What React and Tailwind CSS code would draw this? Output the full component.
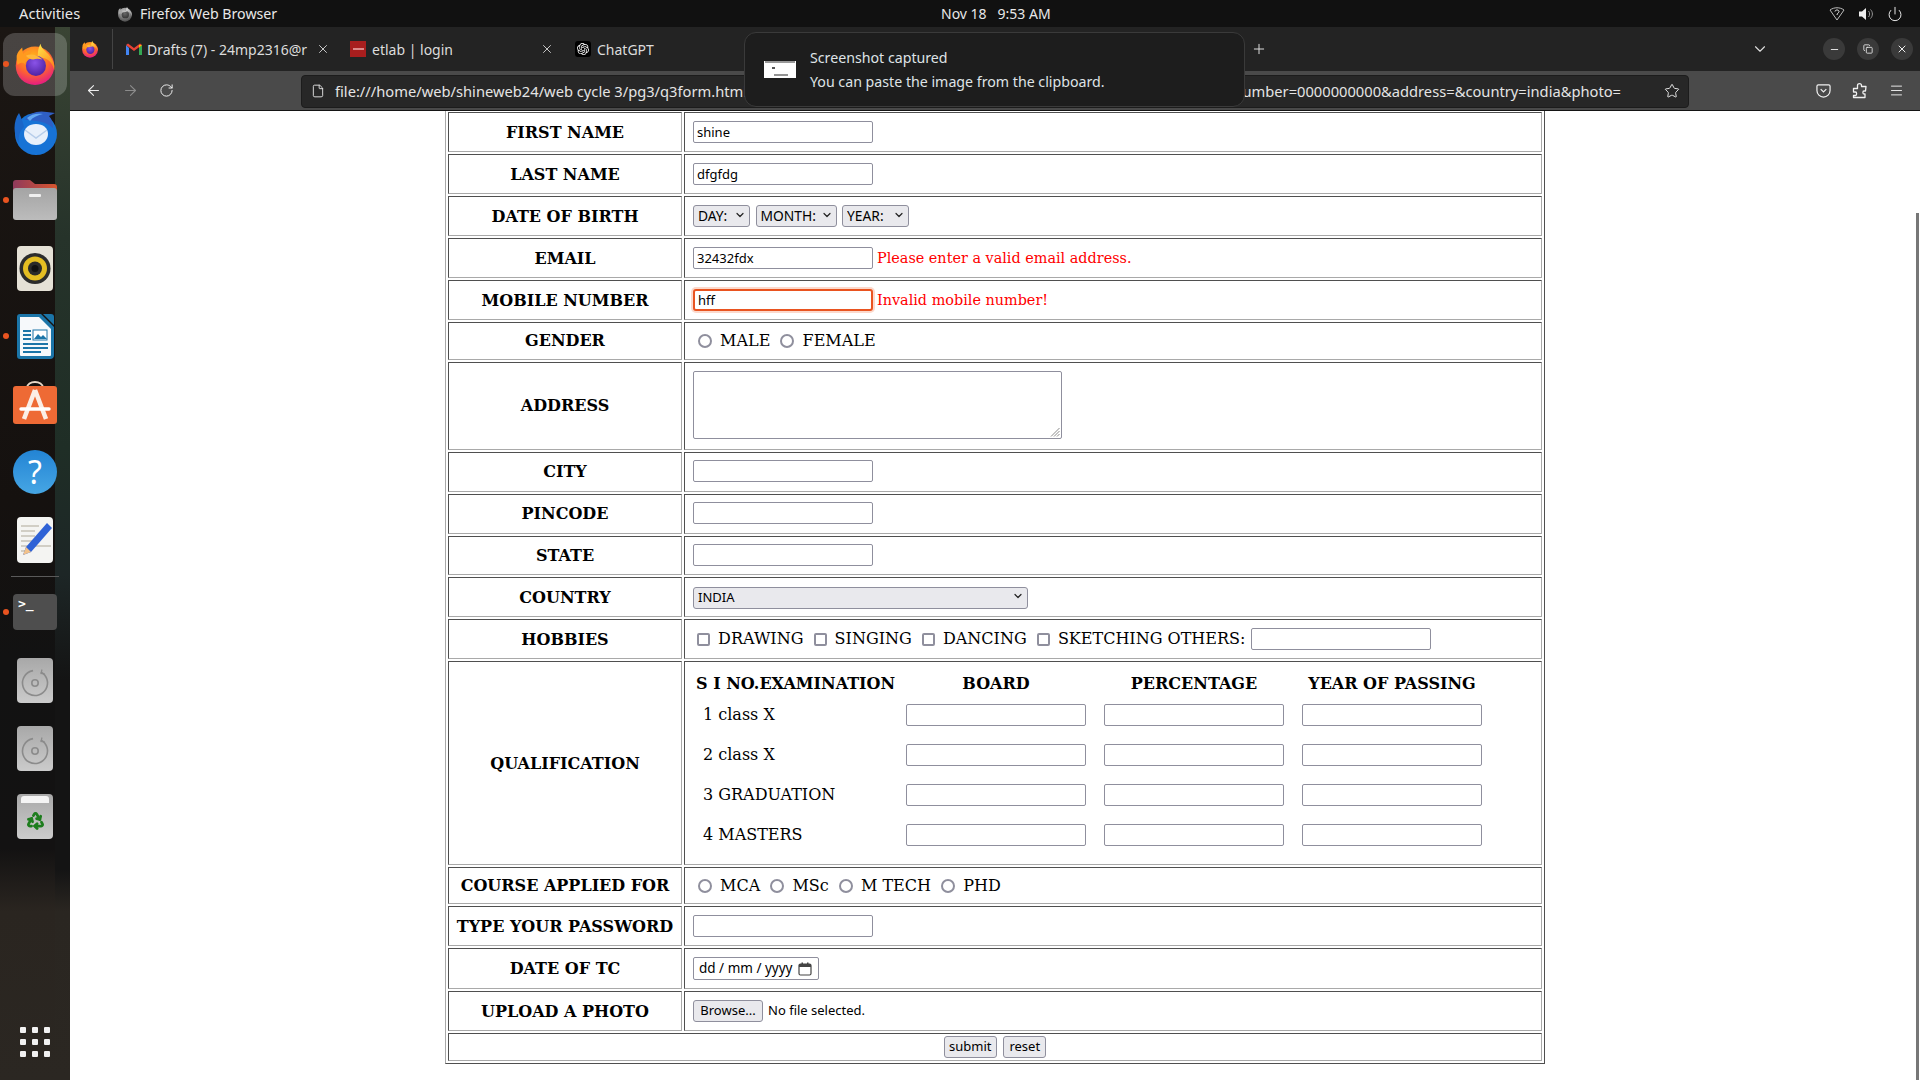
import React from "react";
import { ArrowLeft, ArrowRight, RotateCw, File, Star, Menu, ChevronDown, Plus, X, Minus, Copy, Power, Recycle } from "lucide-react";
import { SiOpenai } from "react-icons/si";

function FirefoxLogo({ size = 44, className = "" }) {
  return (
    <svg width={size} height={size} viewBox="0 0 48 48" className={className}>
      <defs>
        <radialGradient id="ffBase" cx="0.45" cy="0.25" r="0.85">
          <stop offset="0" stopColor="#ffb21c" />
          <stop offset="0.5" stopColor="#ff6a2a" />
          <stop offset="0.85" stopColor="#e8227a" />
          <stop offset="1" stopColor="#d41d8c" />
        </radialGradient>
        <linearGradient id="ffFlame" x1="0" y1="0" x2="0.6" y2="1">
          <stop offset="0" stopColor="#ffe848" />
          <stop offset="1" stopColor="#ff8a1e" />
        </linearGradient>
        <radialGradient id="ffCore" cx="0.45" cy="0.35" r="0.7">
          <stop offset="0" stopColor="#8a53e8" />
          <stop offset="1" stopColor="#4a1f9e" />
        </radialGradient>
      </defs>
      <circle cx="24" cy="26" r="21" fill="url(#ffBase)" />
      <path d="M30 2c1 6 6 8 10 13 4 5 6 10 5 16-1-6-5-11-10-13-2-1-6-1-8-3 0-5 1-9 3-13z" fill="url(#ffFlame)" />
      <circle cx="25" cy="26" r="11" fill="url(#ffCore)" />
      <path d="M4 15c1-4 3-6 6-9l1 7c3-3 6-4 10-3-4 3-3 6 1 7-4 2-8 3-9 7-2-2-5-2-8 1-1-3-1-7-1-10z" fill="#ff9a1f" />
      <path d="M14 15c4-2 9-2 14 1 3 2 4 3 4 3-4-1-7-1-10 0-3 0-5-1-8-4z" fill="#ffb73a" />
    </svg>
  );
}

function Thunderbird() {
  return (
    <svg width="48" height="48" viewBox="0 0 48 48">
      <circle cx="25" cy="26" r="21" fill="#1773d6" />
      <path d="M8 5c-6 8-6 22 0 30-1-8 1-12 5-16-1-5-3-10-5-14z" fill="#1a66c8" />
      <path d="M14 12c4-7 13-10 22-8l8 1-6 3c3 3 4 8 4 12-6-6-18-8-28-8z" fill="#2f5fc4" />
      <path d="M16 10c4-4 10-5 16-4-5 1-10 3-13 7z" fill="#62a8f2" />
      <path d="M25 16c7 0 12 4 12 10s-5 11-12 11-12-5-12-11 5-10 12-10z" fill="#e8f0fb" />
      <path d="M14 22l11 8 11-8" fill="none" stroke="#b6cdea" strokeWidth="1.5" />
    </svg>
  );
}

function Folder() {
  return (
    <svg width="44" height="42" viewBox="0 0 44 42">
      <defs>
        <linearGradient id="fldTop" x1="0" y1="0" x2="1" y2="0">
          <stop offset="0" stopColor="#8f3a5c" />
          <stop offset="1" stopColor="#d8552e" />
        </linearGradient>
        <linearGradient id="fldBody" x1="0" y1="0" x2="0" y2="1">
          <stop offset="0" stopColor="#a4a4a4" />
          <stop offset="1" stopColor="#bcbcbc" />
        </linearGradient>
      </defs>
      <path d="M0 4a3 3 0 013-3h14l5 4h19a3 3 0 013 3v12H0z" fill="url(#fldTop)" />
      <rect x="0" y="9" width="44" height="32" rx="3" fill="url(#fldBody)" />
      <rect x="16" y="15" width="12" height="3" rx="1" fill="#efefef" />
    </svg>
  );
}

function Rhythmbox() {
  return (
    <svg width="36" height="45" viewBox="0 0 36 45">
      <rect x="0" y="0" width="36" height="45" rx="4" fill="#e5e1d6" />
      <circle cx="18" cy="22.5" r="15.5" fill="#2c2c2c" />
      <circle cx="18" cy="22.5" r="12" fill="#e4bd22" />
      <circle cx="18" cy="22.5" r="7" fill="#2a2a2a" />
      <circle cx="18" cy="22.5" r="3.5" fill="#111" />
    </svg>
  );
}

function Writer() {
  return (
    <svg width="37" height="45" viewBox="0 0 37 45">
      <path d="M3 0h21l13 13v28a4 4 0 01-4 4H3a3 3 0 01-3-3V3a3 3 0 013-3z" fill="#1b75a8" />
      <path d="M3 3h19l12 12v26a1 1 0 01-1 1H4a1 1 0 01-1-1z" fill="#f6f9fb" />
      <path d="M26 0h8a3 3 0 013 3v8z" fill="#1b75a8" />
      <rect x="6" y="16" width="8" height="2" fill="#1b75a8" />
      <rect x="6" y="20" width="8" height="2" fill="#1b75a8" />
      <rect x="6" y="24" width="8" height="2" fill="#1b75a8" />
      <rect x="16" y="16" width="14" height="10" fill="#fff" stroke="#1b75a8" />
      <path d="M17 25l4-5 3 3 2-2 4 4z" fill="#1b75a8" />
      <rect x="6" y="29" width="25" height="2" fill="#1b75a8" />
      <rect x="6" y="33" width="25" height="2" fill="#1b75a8" />
      <rect x="6" y="37" width="18" height="2" fill="#1b75a8" />
    </svg>
  );
}

function AppStore() {
  return (
    <svg width="44" height="43" viewBox="0 0 44 43" className="mb-[4px]">
      <path d="M14 7c0-8 16-8 16 0" fill="none" stroke="#e8d8c8" strokeWidth="2" />
      <rect x="0" y="5" width="44" height="38" rx="3" fill="#ee6a35" />
      <path d="M22 9l-11 29M22 9l11 29" stroke="#fbeee6" strokeWidth="4.5" fill="none" />
      <path d="M8 28h28" stroke="#fff" strokeWidth="3.5" strokeLinecap="round" />
    </svg>
  );
}

function TextEditor() {
  return (
    <svg width="36" height="46" viewBox="0 0 36 46">
      <rect x="0" y="0" width="36" height="46" rx="4" fill="#f4f4f2" />
      <path d="M4 9h18M4 14h14M4 19h14M4 24h12M4 29h30M4 34h8" stroke="#c5c1b6" strokeWidth="1.6" />
      <path d="M30 6l5 5-21 24-8 3 3-8z" fill="#2f62d6" />
      <path d="M6 38l3-8 5 5z" fill="#f2c28a" />
    </svg>
  );
}

function Disc() {
  return (
    <svg width="36" height="45" viewBox="0 0 36 45">
      <defs>
        <linearGradient id="discG" x1="0" y1="0" x2="0" y2="1">
          <stop offset="0" stopColor="#a8a8a8" />
          <stop offset="1" stopColor="#cbcbcb" />
        </linearGradient>
      </defs>
      <rect x="0" y="0" width="36" height="45" rx="4" fill="url(#discG)" />
      <circle cx="18" cy="25" r="12.500" fill="none" stroke="#8b8b8b" strokeWidth="1.600" strokeDasharray="70 9" transform="rotate(-62 18 25)" />
      <path d="M25 11.500l-1 4 4 .5" fill="none" stroke="#8b8b8b" strokeWidth="1.200" />
      <circle cx="18" cy="25" r="3.200" fill="none" stroke="#8b8b8b" strokeWidth="1.600" />
    </svg>
  );
}

function Trash() {
  return (
    <div className="relative w-[36px] h-[45px] rounded-[4px] bg-[linear-gradient(#a8a8a8,#cccccc)] flex items-center justify-center">
      <div className="absolute top-[2px] left-[4px] right-[4px] h-[7px] bg-[#f4f4f4] rounded-t-[3px]" />
      <Recycle size={19} color="#1d7d1d" strokeWidth={3.5} className="mt-[9px]" />
    </div>
  );
}

const dockItems = [
  { key: "ff", node: <FirefoxLogo size={44} />, active: true, dot: true },
  { key: "tb", node: <Thunderbird /> },
  { key: "folder", node: <Folder />, dot: true },
  { key: "rb", node: <Rhythmbox /> },
  { key: "wr", node: <Writer />, dot: true },
  { key: "as", node: <AppStore /> },
  {
    key: "help",
    node: (
      <div className="w-[44px] h-[44px] rounded-full bg-[linear-gradient(#2384d4,#46a6e4)] flex items-center justify-center text-white text-[32px] leading-none font-['Noto_Sans',sans-serif]">
        ?
      </div>
    ),
  },
  { key: "te", node: <TextEditor /> },
];

const dockItems2 = [
  {
    key: "term",
    dot: true,
    node: (
      <div className="w-[44px] h-[36px] rounded-[4px] bg-[#4e4e4e] text-white text-[13px] leading-none font-bold pl-[5px] pt-[3px] font-['DejaVu_Sans_Mono',monospace]">
        &gt;_
      </div>
    ),
  },
  { key: "d1", node: <Disc /> },
  { key: "d2", node: <Disc /> },
  { key: "trash", node: <Trash /> },
];

function DockItem({ item }) {
  return (
    <div className="relative w-full h-[68px] flex items-center justify-center">
      {item.active && <div className="absolute left-[3px] top-[3px] w-[64px] h-[63px] rounded-[12px] bg-white/20" />}
      {item.dot && <div className="absolute left-[3px] top-[31px] w-[6px] h-[6px] rounded-full bg-[#e95420]" />}
      <div className="relative flex">{item.node}</div>
    </div>
  );
}

function Dock() {
  return (
    <aside className="relative w-[70px] shrink-0 flex flex-col pt-[3px] bg-[linear-gradient(#1b1613_0%,#15110f_45%,#121212_60%,#131212_78%,#2a2520_84%,#2b2722_100%)]">
      <div className="absolute right-0 top-0 bottom-0 w-[15px] bg-[linear-gradient(#3a4434_0%,#26332a_20%,#1f2e26_40%,#1d2626_52%,#141414_62%,#141414_80%,#2a2621_84%,#2b2722_100%)]" />
      <div className="relative flex flex-col h-full">
        {dockItems.map((i) => <DockItem key={i.key} item={i} />)}
        <div className="mx-[11px] h-px bg-[#5a5a5a] mt-[2px] mb-[1px]" />
        {dockItems2.map((i) => <DockItem key={i.key} item={i} />)}
        <div className="mt-auto mb-[23px] ml-[20px] grid grid-cols-[6px_6px_6px] gap-[6px]">
          {[1, 2, 3, 4, 5, 6, 7, 8, 9].map((n) => <div key={n} className="w-[6px] h-[6px] rounded-[1px] bg-[#f2f2f2]" />)}
        </div>
      </div>
    </aside>
  );
}

function TopBar() {
  return (
    <header className="relative h-[27px] shrink-0 bg-[#111111] text-[#e8e8e8] text-[14px] flex items-center font-['Noto_Sans',sans-serif]">
      <span className="ml-[19px] w-[98px] text-[14.700px]">Activities</span>
      <FirefoxLogo size={16} className="grayscale" />
      <span className="ml-[7px] text-[14.200px]">Firefox Web Browser</span>
      <span className="absolute left-[941px] whitespace-pre">Nov 18   9:53 AM</span>
      <div className="ml-auto mr-[17px] flex items-center gap-[13px]">
        <svg width="16" height="16" viewBox="0 0 16 16" fill="none" stroke="#bbb" strokeWidth="1">
          <path d="M1 4c4-3 10-3 14 0l-7 10z" />
          <path d="M6 5.500c0-2 4-2 4 0 0 1.500-2 1.500-2 3.500" stroke="#eee" />
        </svg>
        <svg width="16" height="16" viewBox="0 0 16 16">
          <path d="M1 5.500h3l4-3.500v12l-4-3.500H1z" fill="#eee" />
          <path d="M10.500 5c1.500 1.500 1.500 4.500 0 6M12.500 3.500c2.500 2.500 2.500 6.500 0 9" fill="none" stroke="#999" />
        </svg>
        <Power size={16} color="#e8e8e8" strokeWidth={1.5} />
      </div>
    </header>
  );
}

function Tab({ icon, title, close, w, gap = "ml-[6px]" }) {
  return (
    <div className={`flex items-center h-full ${w}`}>
      {icon}
      <span className={`${gap} mr-[3px] flex-1 overflow-hidden whitespace-nowrap`}>{title}</span>
      {close && <X size={14} color="#ddd" strokeWidth={1.5} />}
    </div>
  );
}

function TabBar() {
  return (
    <div className="h-[44px] shrink-0 bg-[#232323] flex items-center text-[14px] text-[#dcdcdc] font-['Noto_Sans',sans-serif]">
      <div className="w-[43px] h-[40px] border-r border-[#444] flex items-center justify-center pr-[3px]">
        <FirefoxLogo size={18} />
      </div>
      <div className="w-[13px]" />
      <Tab
        w="w-[204px]"
        gap="ml-[5px]"
        title="Drafts (7) - 24mp2316@r"
        close
        icon={
          <svg width="16" height="13" viewBox="0 0 16 13">
            <path d="M0 2v10h3V5z" fill="#4285f4" />
            <path d="M16 2v10h-3V5z" fill="#34a853" />
            <path d="M0 2l8 6 8-6-2-1.500-6 4.500-6-4.500z" fill="#ea4335" />
            <path d="M13 2l3 0-3 3z" fill="#fbbc04" />
          </svg>
        }
      />
      <div className="w-[20px]" />
      <Tab
        w="w-[204px]"
        title="etlab | login"
        close
        icon={
          <div className="w-[16px] h-[16px] bg-[#a81e1e] flex items-center justify-center">
            <div className="w-[11px] h-[2px] bg-[#d88]" />
          </div>
        }
      />
      <div className="w-[21px]" />
      <Tab
        w="w-[200px]"
        title="ChatGPT"
        icon={
          <div className="w-[16px] h-[16px] rounded-[3px] bg-black flex items-center justify-center">
            <SiOpenai size={12} color="#fff" />
          </div>
        }
      />
      <Plus size={16} color="#ddd" strokeWidth={1.5} className="absolute left-[1181px]" />
      <ChevronDown size={18} color="#ddd" strokeWidth={1.5} className="absolute left-[1681px]" />
      <div className="ml-auto mr-[7px] flex items-center gap-[12px]">
        {[<Minus key="a" size={11} color="#eee" />, <Copy key="b" size={10} color="#eee" />, <X key="c" size={12} color="#eee" />].map((ic, i) => (
          <div key={i} className="w-[22px] h-[22px] rounded-full bg-[#3a3a3a] flex items-center justify-center">{ic}</div>
        ))}
      </div>
    </div>
  );
}

function Toolbar() {
  return (
    <div className="h-[40px] shrink-0 bg-[#4a4a4a] border-b border-[#141414] flex items-center font-['Noto_Sans',sans-serif]">
      <div className="w-[231px] pl-[15px] flex items-center gap-[20px]">
        <ArrowLeft size={17} color="#eeeeee" strokeWidth={1.5} />
        <ArrowRight size={17} color="#8c8c8c" strokeWidth={1.5} />
        <RotateCw size={15} color="#eeeeee" strokeWidth={1.6} />
      </div>
      <div className="w-[1388px] h-[33px] mt-[1px] bg-[#272727] border border-[#1c1c1c] rounded-[4px] flex items-center text-[14.700px] text-[#e4e4e4]">
        <File size={14} color="#e4e4e4" strokeWidth={1.6} className="ml-[9px]" />
        <span className="ml-[10px] whitespace-pre">file:///home/web/shineweb24/web cycle 3/pg3/q3form.html</span>
        <span className="ml-auto whitespace-pre">umber=0000000000&amp;address=&amp;country=india&amp;photo=</span>
        <Star size={16} color="#e4e4e4" strokeWidth={1.5} className="ml-[43px] mr-[8px]" />
      </div>
      <div className="ml-auto mr-[16px] flex items-center gap-[21px]">
        <svg width="15" height="15" viewBox="0 0 16 16" fill="none" stroke="#f0f0f0" strokeWidth="1.300">
          <path d="M2.500 2h11a1.500 1.500 0 011.500 1.500V8a7 7 0 01-14 0V3.500A1.500 1.500 0 012.500 2z" />
          <path d="M5 6.500l3 3 3-3" />
        </svg>
        <svg width="16" height="17" viewBox="0 0 16 17" fill="none" stroke="#f0f0f0" strokeWidth="1.300" strokeLinejoin="round">
          <path d="M1.500 6.500h4V3.500c0-2.500 4-2.500 4 0v1h4.500l-.5 4.500h-1.500c-1.500 0-1.500 3 0 3h1v3.500H1.500v-2h2c1.500 0 1.500-3.500 0-3.500h-2z" />
        </svg>
        <Menu size={15} color="#f0f0f0" strokeWidth={1.5} />
      </div>
    </div>
  );
}

function Notification() {
  return (
    <div className="absolute left-[744px] top-[32px] w-[501px] h-[75px] rounded-[12px] bg-[#1d1d1d] border border-[#3a3a3a] flex items-center text-[14.200px] text-[#dfe3e6] font-['Noto_Sans',sans-serif]">
      <div className="ml-[19px] w-[32px] h-[17px] bg-white relative">
        <div className="absolute left-[1px] top-0 w-[30px] h-[2px] bg-[#333]/50" />
        <div className="absolute left-[8px] top-[6px] w-[3px] h-[2px] bg-[#555]" />
        <div className="absolute left-[10px] top-[13px] w-[14px] h-[2px] bg-[#666]/70" />
      </div>
      <div className="ml-[14px] flex flex-col gap-[4px] leading-[20px]">
        <span>Screenshot captured</span>
        <span>You can paste the image from the clipboard.</span>
      </div>
    </div>
  );
}

const labelCell = "border border-t-[#4f4f4f] border-l-[#4f4f4f] border-r-[#a9a9a9] border-b-[#a9a9a9] px-[1px] text-center font-bold align-middle whitespace-nowrap";
const valueCell = "border border-t-[#4f4f4f] border-l-[#4f4f4f] border-r-[#a9a9a9] border-b-[#a9a9a9] pl-[8px] pr-[1px] py-[1px] align-middle";
const inputCls = "block w-[180px] h-[22px] bg-white border border-[#8f8f9d] rounded-[2px] px-[3px] text-[13px] text-black outline-none font-['Noto_Sans',sans-serif]";
const radioCls = "appearance-none inline-block w-[14px] h-[14px] rounded-full border-2 border-[#8f8f9d] bg-white align-[-2px] ml-[5px] mr-[3px]";
const checkCls = "appearance-none inline-block w-[13px] h-[13px] rounded-[2px] border-2 border-[#8f8f9d] bg-white align-[-2px] ml-[5px] mr-[3px]";
const errorCls = "text-[#ff0000] text-[14.400px] mt-[2px]";

function TextInput({ value = "", type = "text", className = "" }) {
  return <input type={type} defaultValue={value} className={`${inputCls} ${className}`} />;
}

function Sel({ label, w, text = "text-[13.800px]", chevron = "right-[4px]" }) {
  return (
    <div className={`relative h-[22px] ${w}`}>
      <select className={`appearance-none w-full h-full bg-[#e9e9ed] border border-[#8f8f9d] rounded-[3px] pl-[4px] text-black font-['Noto_Sans',sans-serif] outline-none ${text}`}>
        <option>{label}</option>
      </select>
      <ChevronDown size={12} strokeWidth={2.4} color="#222" className={`absolute top-[5px] pointer-events-none ${chevron}`} />
    </div>
  );
}

function Row({ label, h, children, lift = "" }) {
  return (
    <tr>
      <td className={`${labelCell} ${h} ${lift}`}>{label}</td>
      <td className={`${valueCell} ${h}`}>{children}</td>
    </tr>
  );
}

function Radio({ label, name }) {
  return (
    <>
      <input type="radio" name={name} className={radioCls} /> {label}{" "}
    </>
  );
}

function Check({ label }) {
  return (
    <>
      <input type="checkbox" className={checkCls} /> {label}{" "}
    </>
  );
}

function Qualification() {
  const rows = ["1 class X", "2 class X", "3 GRADUATION", "4 MASTERS"];
  return (
    <div className="pl-[3px]">
      <div className="grid grid-cols-[192px_180px_180px_180px] gap-x-[18px] h-[22px] mb-[9px] items-center font-bold text-center whitespace-nowrap">
        <div className="text-left">S I NO.EXAMINATION</div>
        <div>BOARD</div>
        <div>PERCENTAGE</div>
        <div>YEAR OF PASSING</div>
      </div>
      <div className="grid grid-cols-[192px_180px_180px_180px] gap-x-[18px] gap-y-[16px] items-center">
        {rows.map((r) => (
          <React.Fragment key={r}>
            <div className="pl-[7px]">{r}</div>
            <TextInput />
            <TextInput />
            <TextInput />
          </React.Fragment>
        ))}
      </div>
    </div>
  );
}

function FormTable() {
  const lift = "pt-[2px]";
  return (
    <table className="table-fixed border-separate border-spacing-[2px] w-[1100px] mx-auto -mt-[2px] border border-t-[#a9a9a9] border-l-[#a9a9a9] border-r-[#4f4f4f] border-b-[#4f4f4f] text-[16px] text-black font-['DejaVu_Serif',serif]">
      <colgroup>
        <col className="w-[234px]" />
        <col />
      </colgroup>
      <tbody>
        <Row label="FIRST NAME" h="h-[40px]" lift={lift}><TextInput value="shine" /></Row>
        <Row label="LAST NAME" h="h-[40px]" lift={lift}><TextInput value="dfgfdg" /></Row>
        <Row label="DATE OF BIRTH" h="h-[40px]" lift={lift}>
          <div className="flex items-center gap-[5.500px] mb-[2px]">
            <Sel label="DAY:" w="w-[57px]" />
            <Sel label="MONTH:" w="w-[81px]" />
            <Sel label="YEAR:" w="w-[67px]" />
          </div>
        </Row>
        <Row label="EMAIL" h="h-[40px]" lift={lift}>
          <div className="flex items-center gap-[4px]">
            <TextInput value="32432fdx" />
            <span className={errorCls}>Please enter a valid email address.</span>
          </div>
        </Row>
        <Row label="MOBILE NUMBER" h="h-[40px]" lift={lift}>
          <div className="flex items-center gap-[4px]">
            <TextInput value="hff" className="border-2 border-[#e95420] rounded-[3px] px-[2px] shadow-[0_0_0_2px_#fcd9cc]" />
            <span className={errorCls}>Invalid mobile number!</span>
          </div>
        </Row>
        <Row label="GENDER" h="h-[38px]">
          <Radio label="MALE" name="g" />
          <Radio label="FEMALE" name="g" />
        </Row>
        <Row label="ADDRESS" h="h-[88px]">
          <div className="relative w-[369px] h-[68px] mb-[2px]">
            <textarea className="block w-full h-full resize-none bg-white border border-[#8f8f9d] rounded-[2px] outline-none" />
            <svg width="10" height="10" viewBox="0 0 10 10" className="absolute right-[2px] bottom-[2px]" stroke="#8a8a8a" strokeWidth="1">
              <path d="M9.500 1L1 9.500M9.500 4L4 9.500M9.500 7L7 9.500" />
            </svg>
          </div>
        </Row>
        <Row label="CITY" h="h-[40px]"><TextInput className="mb-[2px]" /></Row>
        <Row label="PINCODE" h="h-[40px]"><TextInput className="mb-[2px]" /></Row>
        <Row label="STATE" h="h-[39px]"><TextInput className="mb-[2px]" /></Row>
        <Row label="COUNTRY" h="h-[40px]" lift={lift}>
          <div className="mb-[2px]">
            <Sel label="INDIA" w="w-[335px]" text="text-[13px]" />
          </div>
        </Row>
        <Row label="HOBBIES" h="h-[40px]" lift={lift}>
          <div className="flex items-center whitespace-pre -ml-[1px]">
            <span>
              <Check label="DRAWING" />
              <Check label="SINGING" />
              <Check label="DANCING" />
              <Check label="SKETCHING" />
              OTHERS:{" "}
            </span>
            <TextInput className="ml-[1px]" />
          </div>
        </Row>
        <tr>
          <td className={`${labelCell} h-[204px] pt-[2px]`}>QUALIFICATION</td>
          <td className={`${valueCell} h-[204px] !align-top pt-[10px]`}><Qualification /></td>
        </tr>
        <Row label="COURSE APPLIED FOR" h="h-[37px]">
          <Radio label="MCA" name="c" />
          <Radio label="MSc" name="c" />
          <Radio label="M TECH" name="c" />
          <Radio label="PHD" name="c" />
        </Row>
        <Row label="TYPE YOUR PASSWORD" h="h-[40px]" lift="pt-[1px]"><TextInput /></Row>
        <Row label="DATE OF TC" h="h-[41px]">
          <div className="w-[126px] h-[23px] bg-white border border-[#8f8f9d] rounded-[2px] flex items-center pl-[5px] text-[13.500px] font-['Noto_Sans',sans-serif]">
            <span className="whitespace-pre">dd / mm / yyyy</span>
            <svg width="14" height="14" viewBox="0 0 14 14" className="ml-[6px]">
              <rect x="1" y="2" width="12" height="11" rx="1.500" fill="none" stroke="#444" strokeWidth="1.200" />
              <rect x="1" y="2" width="12" height="3" fill="#444" />
              <rect x="3.500" y="0.500" width="1.500" height="2.500" fill="#444" />
              <rect x="9" y="0.500" width="1.500" height="2.500" fill="#444" />
            </svg>
          </div>
        </Row>
        <Row label="UPLOAD A PHOTO" h="h-[40px]" lift="pt-[1px]">
          <div className="flex items-center text-[13px] font-['Noto_Sans',sans-serif]">
            <button className="w-[70px] h-[22px] bg-[#e9e9ed] border border-[#8f8f9d] rounded-[3px]">Browse...</button>
            <span className="ml-[5px]">No file selected.</span>
          </div>
        </Row>
        <tr>
          <td colSpan={2} className="border border-t-[#4f4f4f] border-l-[#4f4f4f] border-r-[#a9a9a9] border-b-[#a9a9a9] h-[28px] p-[1px]">
            <div className="flex items-center justify-center gap-[6.500px] text-[13px] font-['Noto_Sans',sans-serif]">
              <button className="w-[53px] h-[22px] bg-[#e9e9ed] border border-[#8f8f9d] rounded-[3px]">submit</button>
              <button className="w-[43px] h-[22px] bg-[#e9e9ed] border border-[#8f8f9d] rounded-[3px]">reset</button>
            </div>
          </td>
        </tr>
      </tbody>
    </table>
  );
}

export default function App() {
  return (
    <div className="relative w-[1920px] h-[1080px] overflow-hidden flex flex-col bg-white">
      <TopBar />
      <div className="flex flex-1 min-h-0">
        <Dock />
        <main className="relative flex-1 flex flex-col min-w-0">
          <TabBar />
          <Toolbar />
          <div className="relative flex-1 bg-white overflow-hidden">
            <FormTable />
            <div className="absolute right-[1px] top-[102px] bottom-0 w-[3px] bg-[#777777]" />
          </div>
        </main>
      </div>
      <Notification />
    </div>
  );
}
